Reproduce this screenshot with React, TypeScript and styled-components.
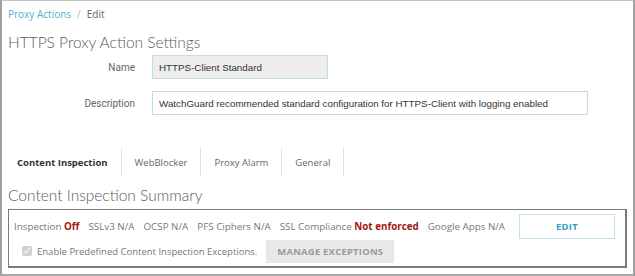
import React from "react";
import styled, {createGlobalStyle} from "styled-components";

const GlobalStyle = createGlobalStyle`
body{
margin: 0;
background: #fff;
font-family: "Open Sans", "Liberation Sans", sans-serif;
}
`;

const Frame = styled.div`
box-sizing: border-box;
width: 635px;
height: 276px;
border: 1px solid #c4c4c4;
border-left: 2px solid #a0a0a0;
border-right: 2px solid #a0a0a0;
border-bottom: 2px solid #a8a8a8;
padding: 0 0 0 6px;
overflow: hidden;
`;

const Crumbs = styled.div`
display: flex;
align-items: center;
gap: 6px;
height: 25px;
font-size: 10px;
color: #666;
>a{
color: #4fb0cc;
text-decoration: none;
}
>.sep{
color: #b5b5b5;
}
`;

const Title = styled.h1`
margin: 4px 0 0;
font-family: Lato, "Open Sans", sans-serif;
font-size: 15.5px;
font-weight: 300;
color: #5a5a5a;
line-height: 24px;
`;

const Form = styled.div`
display: grid;
grid-template-columns: 127px auto;
column-gap: 17px;
row-gap: 12px;
align-items: center;
margin-top: 1px;
`;

const Label = styled.label`
text-align: right;
font-family: Roboto, "Liberation Sans", sans-serif;
font-size: 10px;
color: #666;
`;

const Field = styled.div<{ $width: number; $readOnly?: boolean }>`
box-sizing: border-box;
width: ${p => p.$width}px;
height: 24px;
display: flex;
align-items: center;
padding: 0 6px;
border: 1px solid #bfe0de;
background: ${p => (p.$readOnly ? "#eeeeee" : "#fff")};
font-family: "Liberation Sans", Arial, sans-serif;
font-size: 9.8px;
color: #333;
white-space: nowrap;
`;

const Tabs = styled.div`
display: flex;
margin-top: 33px;
height: 28px;
`;

const Tab = styled.div<{ $active?: boolean }>`
display: flex;
align-items: center;
padding: 0 13px;
font-size: 9.5px;
font-weight: ${p => (p.$active ? 700 : 400)};
color: ${p => (p.$active ? "#333" : "#666")};
border-right: 1px solid #e0e0e0;
&:first-child{
padding-left: 9px;
}
`;

const SubTitle = styled.h2`
margin: 9px 0 0;
font-family: Lato, "Open Sans", sans-serif;
font-size: 15.5px;
font-weight: 300;
color: #5a5a5a;
line-height: 20px;
`;

const Summary = styled.div`
box-sizing: border-box;
width: 619px;
height: 59px;
margin-top: 4px;
border: 1px solid #7a7a7a;
border-width: 1px 2px 2px 1px;
padding: 4px 10px 0 5px;
display: flex;
flex-direction: column;
gap: 1px;
font-size: 9.8px;
color: #777;
`;

const Row = styled.div`
display: flex;
align-items: center;
gap: 9px;
height: 24px;
`;

const Stat = styled.span`
white-space: nowrap;
>b{
color: #a01818;
font-weight: 700;
}
`;

const Button = styled.button<{ $variant: "outline" | "gray" }>`
box-sizing: border-box;
height: ${p => (p.$variant === "outline" ? 25 : 23)}px;
font-family: "Open Sans", "Liberation Sans", sans-serif;
font-size: 9.5px;
font-weight: 700;
letter-spacing: 0.2px;
border: 1px solid ${p => (p.$variant === "outline" ? "#bfe3e4" : "#e6e6e6")};
background: ${p => (p.$variant === "outline" ? "#fff" : "#e9e9e9")};
color: ${p => (p.$variant === "outline" ? "#36a0bf" : "#9a9a9a")};
padding: 0 10px;
cursor: pointer;
`;

const Check = styled.label`
display: flex;
align-items: center;
gap: 5px;
padding-left: 8px;
font-size: 9.5px;
color: #777;
>input{
margin: 0;
width: 10px;
height: 10px;
}
`;

export default function App() {
  const stats: [string, string, boolean?][] = [
    ["Inspection", "Off", true],
    ["SSLv3", "N/A"],
    ["OCSP", "N/A"],
    ["PFS Ciphers", "N/A"],
    ["SSL Compliance", "Not enforced", true],
    ["Google Apps", "N/A"],
  ];
  return (
    <Frame>
      <GlobalStyle/>
      <Crumbs>
        <a href="#">Proxy Actions</a>
        <span className="sep">/</span>
        <span>Edit</span>
      </Crumbs>
      <Title>HTTPS Proxy Action Settings</Title>
      <Form>
        <Label>Name</Label>
        <Field $width={176} $readOnly>HTTPS-Client Standard</Field>
        <Label>Description</Label>
        <Field $width={436}>WatchGuard recommended standard configuration for HTTPS-Client with logging enabled</Field>
      </Form>
      <Tabs>
        <Tab $active>Content Inspection</Tab>
        <Tab>WebBlocker</Tab>
        <Tab>Proxy Alarm</Tab>
        <Tab>General</Tab>
      </Tabs>
      <SubTitle>Content Inspection Summary</SubTitle>
      <Summary>
        <Row>
          {stats.map(([k, v, strong]) => (
            <Stat key={k}>{k} {strong ? <b>{v}</b> : v}</Stat>
          ))}
          <Button $variant="outline" style={{width: 96, marginLeft: "auto"}}>EDIT</Button>
        </Row>
        <Row>
          <Check><input type="checkbox" defaultChecked disabled/>Enable Predefined Content Inspection Exceptions.</Check>
          <Button $variant="gray">MANAGE EXCEPTIONS</Button>
        </Row>
      </Summary>
    </Frame>
  );
}
